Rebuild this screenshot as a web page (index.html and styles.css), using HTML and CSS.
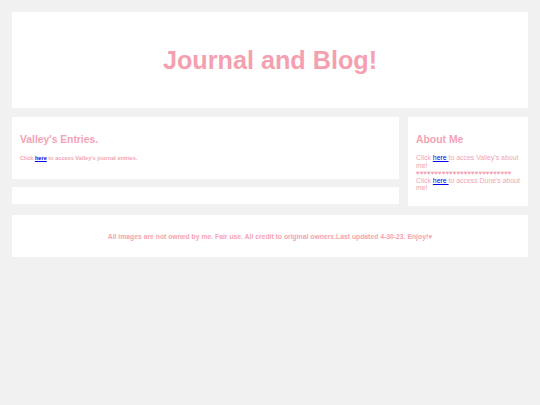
FILE: index.html
```html
<!DOCTYPE html>
<html>
<head>
<meta charset="utf-8">
<link rel="stylesheet" href="styles.css">
</head>
<body>
<div class="page">
  <div class="header"><h1>Journal and Blog!</h1></div>
  <div class="row">
    <div class="leftcol">
      <div class="card entries">
        <h2>Valley's Entries.</h2>
        <p class="small">Click <a href="#">here</a> to access Valley's journal entries.</p>
      </div>
      <div class="card empty"></div>
    </div>
    <div class="rightcol">
      <div class="card about">
        <h3>About Me</h3>
        <p class="atext">Click <a href="#">here </a>to acces Valley's about me!</p>
        <p class="hearts">♥♥♥♥♥♥♥♥♥♥♥♥♥♥♥♥♥♥♥♥♥♥♥♥♥♥</p>
        <p class="atext">Click <a href="#">here </a>to access Dune's about me!</p>
      </div>
    </div>
  </div>
  <div class="footer"><p>All images are not owned by me. Fair use. All credit to original owners.Last updated 4-30-23. Enjoy!♥</p></div>
</div>
</body>
</html>
```
FILE: styles.css
```css
html, body { margin: 0; padding: 0; }
body { background: #f1f1f1; font-family: "Liberation Sans", Arial, sans-serif; color: #f4a3b5; }
.page { padding: 12px; display: flex; flex-direction: column; gap: 9px; }
.header { background: #fff; height: 96px; display: flex; align-items: center; justify-content: center; }
.header h1 { margin: 0; font-size: 25.2px; font-weight: bold; color: #f4a0b0; }
.row { display: flex; gap: 9px; align-items: flex-start; }
.leftcol { flex: 0 0 387px; display: flex; flex-direction: column; gap: 8px; }
.rightcol { flex: 1; }
.card { background: #fff; box-sizing: border-box; }
.entries { height: 62px; padding: 16px 8px 0; }
.entries h2 { margin: 0; font-size: 10.3px; line-height: 13px; font-weight: bold; }
.small { margin: 9px 0 0; font-size: 5.6px; font-weight: bold; }
.empty { height: 17px; }
.about { height: 89px; padding: 16px 5px 0 8px; }
.about h3 { margin: 0 0 8px; font-size: 10.4px; line-height: 13px; font-weight: bold; }
.atext { margin: 0; font-size: 6.9px; line-height: 7.5px; }
.hearts { margin: 0; font-size: 6.2px; line-height: 7.5px; letter-spacing: 0; white-space: nowrap; overflow: hidden; }
a { color: #0000ee; }
.footer { background: #fff; height: 42px; display: flex; align-items: center; justify-content: center; }
.footer p { margin: 0; font-size: 6.8px; font-weight: bold; }
```
